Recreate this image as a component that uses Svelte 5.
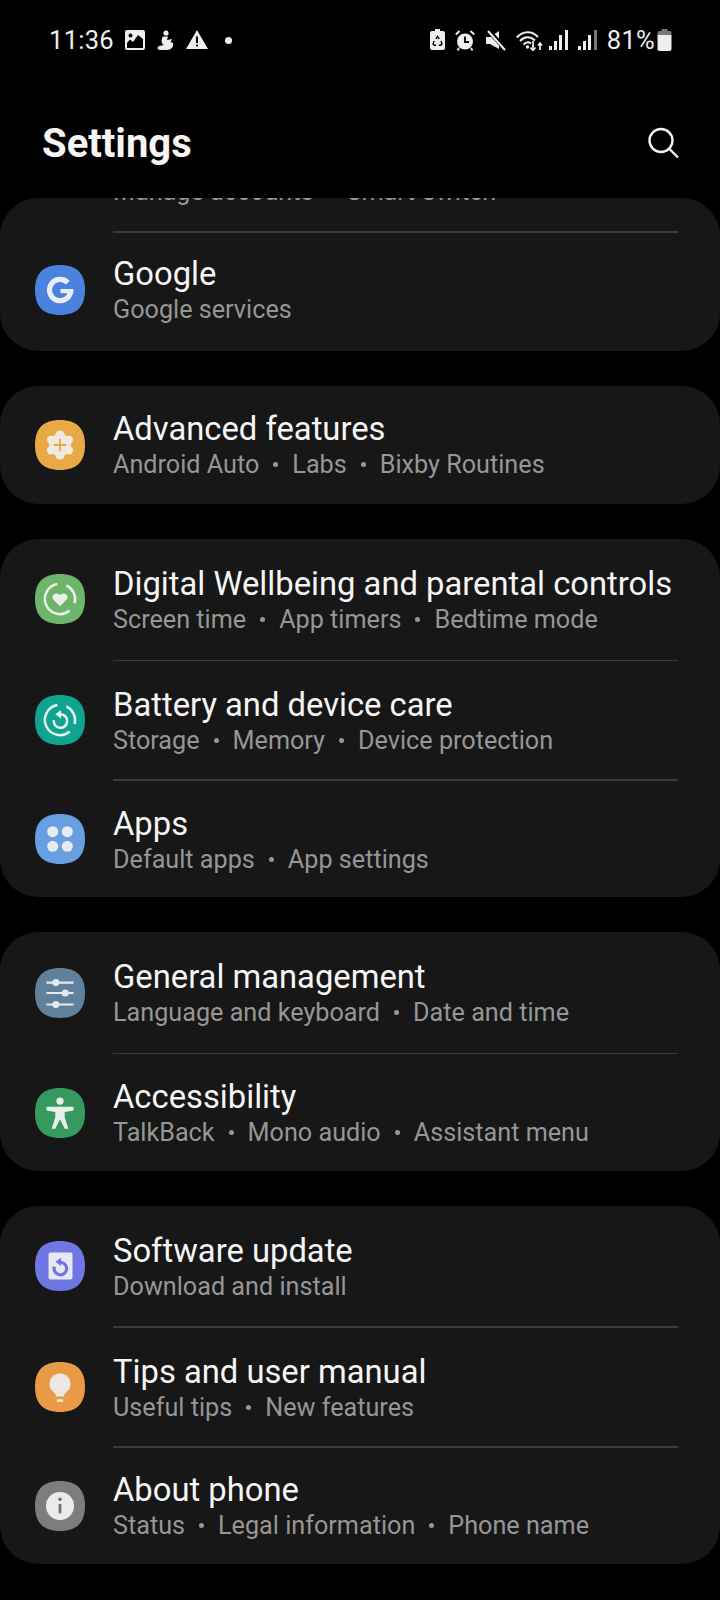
<script lang="ts">
	const groups = [
		{
			peek: ['Manage accounts', 'Smart Switch'],
			rows: [{ icon: 'google', title: 'Google', sub: ['Google services'] }]
		},
		{
			rows: [{ icon: 'advanced', title: 'Advanced features', sub: ['Android Auto', 'Labs', 'Bixby Routines'] }]
		},
		{
			rows: [
				{ icon: 'wellbeing', title: 'Digital Wellbeing and parental controls', sub: ['Screen time', 'App timers', 'Bedtime mode'] },
				{ icon: 'battery', title: 'Battery and device care', sub: ['Storage', 'Memory', 'Device protection'] },
				{ icon: 'apps', title: 'Apps', sub: ['Default apps', 'App settings'] }
			]
		},
		{
			rows: [
				{ icon: 'general', title: 'General management', sub: ['Language and keyboard', 'Date and time'] },
				{ icon: 'access', title: 'Accessibility', sub: ['TalkBack', 'Mono audio', 'Assistant menu'] }
			]
		},
		{
			rows: [
				{ icon: 'update', title: 'Software update', sub: ['Download and install'] },
				{ icon: 'tips', title: 'Tips and user manual', sub: ['Useful tips', 'New features'] },
				{ icon: 'about', title: 'About phone', sub: ['Status', 'Legal information', 'Phone name'] }
			]
		}
	];

	const squircle = 'M24 0C40 0 48 8 48 24C48 40 40 48 24 48C8 48 0 40 0 24C0 8 8 0 24 0Z';
</script>

{#snippet subline(parts: string[])}
	<div class="row-sub">
		{#each parts as part, j}
			{#if j > 0}<span class="sep"></span>{/if}
			<span>{part}</span>
		{/each}
	</div>
{/snippet}

<div class="screen">
	<div class="status">
		<div class="status-left">
			<span class="clock">11:36</span>
			<svg width="20" height="20" viewBox="0 0 20 20"><path fill="#eee" fill-rule="evenodd" d="M2 0H18Q20 0 20 2V18Q20 20 18 20H2Q0 20 0 18V2Q0 0 2 0ZM2 16V18H18V9L13 5L8 12L5 9.500L2 13ZM5.500 3.500A2 2 0 1 0 5.501 3.500Z" /></svg>
			<svg width="18" height="20" viewBox="0 0 18 20"><g fill="#eee"><circle cx="10" cy="3" r="2.600" /><path d="M7 6.500H12L11 10L16 9L14.500 12L17 13C18 17 15 20 11 20H4C1 20 1 17 3 16L8 15C5 14 5 9 7 6.500Z" /></g></svg>
			<svg class="warn" width="22" height="20" viewBox="0 0 22 20"><path fill="#eee" fill-rule="evenodd" d="M11 0L22 19H0ZM10 6.500V13H12V6.500ZM10 14.500V16.500H12V14.500Z" /></svg>
			<span class="dot"></span>
		</div>
		<div class="status-right">
			<svg class="s-batt" width="15" height="22" viewBox="0 0 15 22"><path fill="#eee" d="M5 0H10V2H13Q15 2 15 4V19Q15 21 13 21H2Q0 21 0 19V4Q0 2 2 2H5Z" /><g fill="none" stroke="#000" stroke-width="1.400"><path d="M5.800 10L7.500 7.300L9.200 10" /><path d="M11 12L12 14.800L10.600 16.300H8.800" /><path d="M6.200 16.300H4.300L3 14.800L4.200 12" /></g></svg>
			<svg class="s-alarm" width="20" height="21" viewBox="0 0 20 21"><circle cx="10" cy="11.500" r="8" fill="#eee" /><path d="M10 6.500V12H14" stroke="#000" stroke-width="1.800" fill="none" /><path d="M0.800 4.500L4.500 1M15.500 1L19.200 4.500M4 18L2.500 20.500M16 18L17.500 20.500" stroke="#eee" stroke-width="1.800" fill="none" /></svg>
			<svg class="s-mute" width="20" height="21" viewBox="0 0 20 21"><path fill="#eee" d="M0 7H4L13 1V19L4 14H0Z" /><path d="M1 -1L21 21" stroke="#000" stroke-width="4.500" /><path d="M2 1L19 20" stroke="#eee" stroke-width="2" /></svg>
			<svg class="wifi" width="27" height="21" viewBox="0 0 27 21"><g fill="none" stroke="#eee" stroke-width="2"><path d="M0.800 7.500C7 0.500 16 0.500 22 7" /><path d="M4 11C8.500 6 14.500 6 19 10.500" /><path d="M7.500 14.500C10 12 13 12 15 13.500" /></g><circle cx="11.500" cy="17" r="1.700" fill="#eee" /><path d="M17 11V20M14.500 17.500L17 20.500L19.500 17.500" stroke="#eee" stroke-width="1.700" fill="none" /><path d="M24 20V13M22 15.500L24 13L26 15.500" stroke="#eee" stroke-width="1.700" fill="none" /></svg>
			<svg width="19" height="20" viewBox="0 0 19 20"><path fill="#eee" d="M0 16H3V20H0ZM5 11H8V20H5ZM10 5H13V20H10ZM16 0H19V20H16Z" /></svg>
			<svg width="19" height="20" viewBox="0 0 19 20"><path fill="#eee" d="M0 16H3V20H0ZM5 11H8V20H5ZM10 5H13V20H10Z" /><path fill="#777" d="M16 0H19V20H16Z" /></svg>
			<span class="percent">81%</span>
			<svg width="15" height="22" viewBox="0 0 14 22"><path fill="#777" d="M4 0H10V2H12Q14 2 14 4V6H0V4Q0 2 2 2H4Z" /><path fill="#eee" d="M0 6H14V20Q14 22 12 22H2Q0 22 0 20Z" /></svg>
		</div>
	</div>

	<header class="appbar">
		<h1>Settings</h1>
		<svg width="32" height="32" viewBox="0 0 32 32" fill="none" stroke="#f2f2f2" stroke-width="2.400"><circle cx="14" cy="13.500" r="11.500" /><path d="M22.500 22L31 30.500" /></svg>
	</header>

	<main class="list">
		{#each groups as group}
			<section class="card">
				{#if group.peek}
					<div class="peek">{@render subline(group.peek)}</div>
					<div class="divider"></div>
				{/if}
				{#each group.rows as row, i}
					{#if i > 0}<div class="divider"></div>{/if}
					<div class="row" class:top={i === 0 && group.rows.length > 1} class:bottom={i > 0 && i === group.rows.length - 1}>
						<svg class="app-icon" width="50" height="50" viewBox="0 0 48 48">
							{#if row.icon === 'google'}
								<path fill="#4a82e0" d={squircle} />
								<path d="M31.500 17A10.200 10.200 0 1 0 34.200 25.500" fill="none" stroke="#e9edf4" stroke-width="5" />
								<path d="M24.500 25H36.800" fill="none" stroke="#e9edf4" stroke-width="4" />
							{:else if row.icon === 'advanced'}
								<path fill="#e9aa46" d={squircle} />
								<g fill="#eeeae2"><circle cx="24" cy="14.500" r="4.500" /><circle cx="24" cy="33.500" r="4.500" /><circle cx="15.500" cy="19" r="4" /><circle cx="32.500" cy="19" r="4" /><circle cx="15.500" cy="29" r="4" /><circle cx="32.500" cy="29" r="4" /><circle cx="24" cy="24" r="10.500" /></g>
								<path d="M24 18V30M18 24H30" stroke="#e9aa46" stroke-width="1.800" />
							{:else if row.icon === 'wellbeing'}
								<path fill="#6cb56a" d={squircle} />
								<g fill="none" stroke="#e8f2e6" stroke-width="2.400"><path d="M21.500 9.700A14.500 14.500 0 1 0 33.300 35.100" /><path d="M30.100 10.900A14.500 14.500 0 0 1 38 27.800" /></g>
								<path fill="#ebeeea" d="M24 31L17.800 24.800C14.500 20.800 20 16.300 24 20.300C28 16.300 33.500 20.800 30.200 24.800Z" />
							{:else if row.icon === 'battery'}
								<path fill="#0fa390" d={squircle} />
								<g fill="none" stroke="#e4f3f0" stroke-width="2.400"><path d="M21.500 9.700A14.500 14.500 0 1 0 33.300 35.100" /><path d="M30.100 10.900A14.500 14.500 0 0 1 38 27.800" /><path d="M24.500 18.500A6.500 6.500 0 1 1 18 24" /></g>
								<path fill="#e4f3f0" d="M25 14.500V22.500L19.500 18.500Z" />
							{:else if row.icon === 'apps'}
								<path fill="#689fe0" d={squircle} />
								<g fill="#e8ebef"><circle cx="17" cy="17" r="5.300" /><circle cx="31" cy="17" r="5.300" /><circle cx="17" cy="31" r="5.300" /><circle cx="31" cy="31" r="5.300" /></g>
							{:else if row.icon === 'general'}
								<path fill="#5f819c" d={squircle} />
								<path d="M11 14H37M11 24H37M11 35H37" stroke="#e6eaee" stroke-width="2" />
								<g fill="#e6eaee"><circle cx="20" cy="14" r="3.400" /><circle cx="29" cy="24" r="3.400" /><circle cx="20" cy="35" r="3.400" /></g>
							{:else if row.icon === 'access'}
								<path fill="#369a5e" d={squircle} />
								<circle cx="24" cy="12.500" r="3.500" fill="#e8efe9" />
								<path fill="#e8efe9" d="M11 18H37V21.500L28.500 23V28L32 39H28.500L24 30L19.500 39H16L19.500 28V23L11 21.500Z" />
							{:else if row.icon === 'update'}
								<path fill="#6f78e2" d={squircle} />
								<rect x="13" y="11" width="23" height="26" rx="2" fill="#e7e8f2" />
								<path d="M25 20.500A6 6 0 1 1 18.700 24.500" fill="none" stroke="#6f78e2" stroke-width="3" />
								<path fill="#6f78e2" d="M25 16V24L19.500 20Z" />
							{:else if row.icon === 'tips'}
								<path fill="#e89a47" d={squircle} />
								<path fill="#ebe8e3" d="M24 11A10 10 0 0 0 18 29C20 30.500 20 32 20 33H28C28 32 28 30.500 30 29A10 10 0 0 0 24 11Z" />
								<path d="M21 37H27" stroke="#ebe8e3" stroke-width="2.500" />
							{:else if row.icon === 'about'}
								<path fill="#7d7d7d" d={squircle} />
								<circle cx="24" cy="24" r="13.500" fill="#ebebeb" />
								<circle cx="24" cy="17.500" r="1.700" fill="#6e6e6e" />
								<path d="M24 22V31" stroke="#6e6e6e" stroke-width="2.600" />
							{/if}
						</svg>
						<div class="row-text">
							<div class="row-title">{row.title}</div>
							{@render subline(row.sub)}
						</div>
					</div>
				{/each}
			</section>
		{/each}
	</main>
</div>

<style>
	:global(body) {
		margin: 0;
		background: #000;
	}

	.screen {
		width: 720px;
		height: 1600px;
		overflow: hidden;
		background: #000;
		color: #f2f2f2;
		font-family: Roboto, 'Noto Sans', sans-serif;
	}

	.status {
		display: flex;
		justify-content: space-between;
		align-items: center;
		height: 28px;
		padding: 26px 48px 0 49px;
		color: #eee;
	}

	.status-left,
	.status-right {
		display: flex;
		align-items: center;
	}

	.status-left {
		gap: 11px;
	}

	.status-right {
		gap: 10px;
	}

	.clock,
	.percent {
		font-size: 25.500px;
		letter-spacing: 0.3px;
	}

	.warn {
		margin-left: 1px;
	}

	.dot {
		width: 7px;
		height: 7px;
		margin-left: 6px;
		border-radius: 50%;
		background: #eee;
	}

	.s-alarm {
		margin-right: 1px;
	}

	.wifi {
		margin-right: -4px;
	}

	.percent {
		margin-right: -8px;
	}

	.appbar {
		display: flex;
		justify-content: space-between;
		align-items: center;
		box-sizing: border-box;
		height: 144px;
		padding: 34px 41px 0 42px;
	}

	h1 {
		margin: 0;
		font-size: 40px;
		font-weight: 700;
		color: #f5f5f5;
	}

	.list {
		display: flex;
		flex-direction: column;
		gap: 35px;
	}

	.card {
		overflow: hidden;
		border-radius: 38px;
		background: #171717;
	}

	.peek {
		display: flow-root;
		height: 33px;
		padding-left: 113px;
	}

	.peek .row-sub {
		margin-top: -23px;
	}

	.row {
		display: flex;
		align-items: center;
		box-sizing: border-box;
		height: 118.300px;
		padding-left: 35px;
	}

	.peek + .divider + .row {
		padding-bottom: 4px;
	}

	.row.top {
		height: 120.500px;
	}

	.row.bottom {
		height: 116.500px;
	}

	.divider {
		height: 1.500px;
		margin: 0 42px 0 113px;
		background: #3b3b3b;
	}

	.app-icon {
		flex: none;
	}

	.row-text {
		margin: 3px 0 0 28px;
		white-space: nowrap;
	}

	.row-title {
		font-size: 32.750px;
		line-height: 37px;
		color: #f5f5f5;
	}

	.row-sub {
		display: flex;
		align-items: center;
		font-size: 25.200px;
		line-height: 33px;
		white-space: nowrap;
		color: #969696;
	}

	.sep {
		width: 5px;
		height: 5px;
		margin: 0 14px;
		border-radius: 50%;
		background: #969696;
	}
</style>
